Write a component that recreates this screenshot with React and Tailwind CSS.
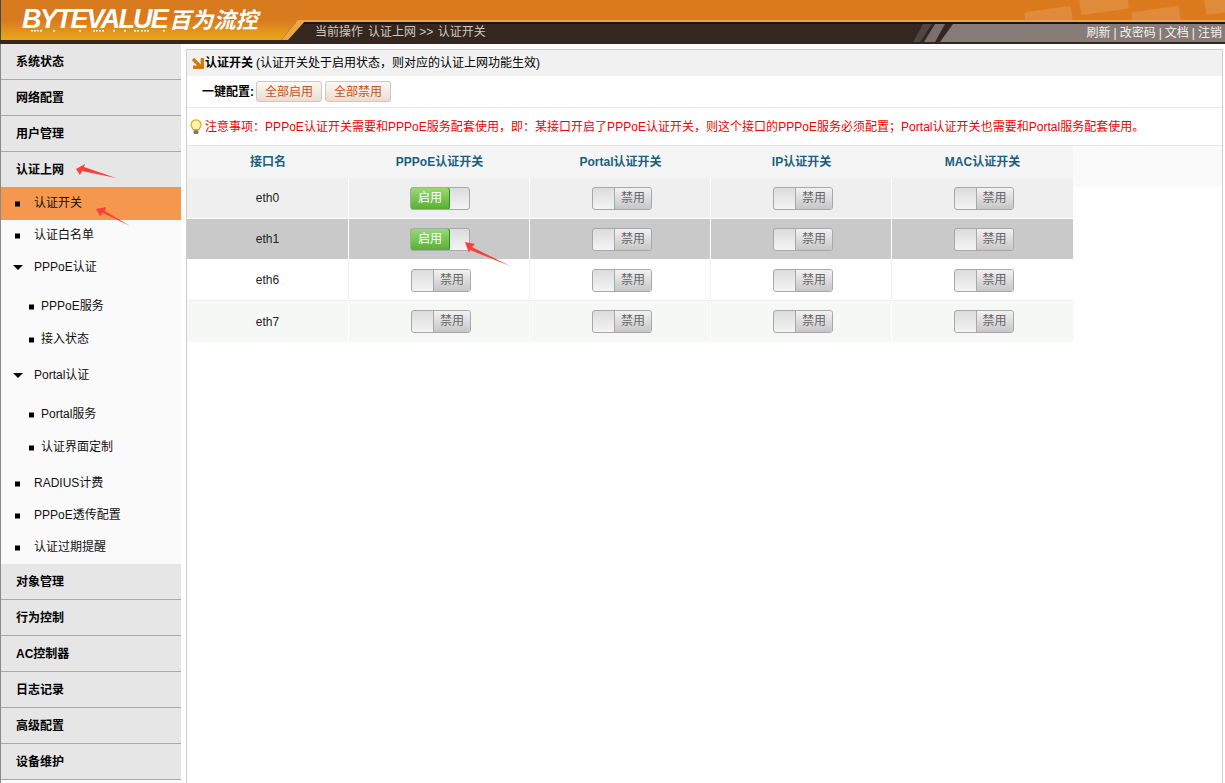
const font = "[font-family:'Liberation_Sans','Noto_Sans_CJK_SC',sans-serif]";

const Arrow = ({ className, points }) => (
  <svg className={`absolute pointer-events-none z-10 ${className}`} width="60" height="36" viewBox="0 0 60 36">
    <polygon points={points} fill="#f8413a" />
  </svg>
);

const MainItem = ({ label }) => (
  <div className="h-[36px] flex items-center pl-[15px] text-[12px] font-bold text-black bg-[#e6e6e6] border-b border-[#a9a9a9] box-border">
    {label}
  </div>
);

const Square = ({ left }) => <span className={`absolute top-1/2 -translate-y-1/2 w-[5px] h-[5px] bg-black ${left}`} />;

const SubItem = ({ label, height = "h-[32px]", active }) => (
  <div className={`relative flex items-center pl-[33px] pb-[2px] text-[12px] text-[#111] ${height} ${active ? "bg-[#f5984e]" : ""}`}>
    <Square left="left-[14px]" />
    {label}
  </div>
);

const GroupItem = ({ label }) => (
  <div className="relative h-[34px] flex items-center pl-[33px] pb-[2px] text-[12px] text-[#111]">
    <span className="absolute left-[12px] top-[14px] w-0 h-0 border-x-[5px] border-x-transparent border-t-[5px] border-t-black" />
    {label}
  </div>
);

const LeafItem = ({ label }) => (
  <div className="relative h-[33px] flex items-center pl-[40px] pb-[2px] text-[12px] text-[#111]">
    <Square left="left-[28px]" />
    {label}
  </div>
);

const Sidebar = () => (
  <aside className="w-[180px] shrink-0 border-l border-[#8a8a8a] bg-[#fafafa] box-content">
    {["系统状态", "网络配置", "用户管理", "认证上网"].map((x) => (
      <MainItem key={x} label={x} />
    ))}
    <SubItem label="认证开关" active />
    <SubItem label="认证白名单" height="h-[31px]" />
    <GroupItem label="PPPoE认证" />
    <div className="h-[5px]" />
    <LeafItem label="PPPoE服务" />
    <LeafItem label="接入状态" />
    <div className="h-[3px]" />
    <GroupItem label="Portal认证" />
    <div className="h-[5px]" />
    <LeafItem label="Portal服务" />
    <LeafItem label="认证界面定制" />
    <div className="h-[4px]" />
    <SubItem label="RADIUS计费" />
    <SubItem label="PPPoE透传配置" />
    <SubItem label="认证过期提醒" />
    {["对象管理", "行为控制", "AC控制器", "日志记录", "高级配置", "设备维护"].map((x) => (
      <MainItem key={x} label={x} />
    ))}
  </aside>
);

const Switch = ({ on }) => (
  <div className="inline-flex w-[60px] h-[23px] rounded-[3px] border border-[#a8a8a8] overflow-hidden bg-gradient-to-b from-[#dcdcdc] to-[#f4f4f4] box-border">
    {on ? (
      <>
        <span className="-m-px w-[40px] h-[23px] rounded-[3px] border border-[#1c9a10] bg-gradient-to-b from-[#9ad874] to-[#57b032] text-white text-[12px] leading-[21px] text-center">
          启用
        </span>
        <span className="flex-1" />
      </>
    ) : (
      <>
        <span className="w-[21px]" />
        <span className="flex-1 border-l border-[#a8a8a8] bg-gradient-to-b from-[#f2f2f2] to-[#c6c6c6] text-[#666] text-[12px] leading-[21px] text-center">
          禁用
        </span>
      </>
    )}
  </div>
);

const rows = [
  { name: "eth0", on: true, bg: "bg-[#efefef]", line: "border-white" },
  { name: "eth1", on: true, bg: "bg-[#c9c9c9]", line: "border-white" },
  { name: "eth6", on: false, bg: "bg-white", line: "border-[#f0f0f0]" },
  { name: "eth7", on: false, bg: "bg-[#f5f8f5]", line: "border-white" },
];

const Cell = ({ children, className }) => (
  <div className={`flex items-center justify-center ${className}`}>{children}</div>
);

const Table = () => (
  <div className="w-[886px]">
    <div className="flex h-[32px] bg-[#f5f5f5] text-[12px] font-bold text-[#1a5f7e]">
      {[
        ["接口名", "w-[162px]"],
        ["PPPoE认证开关", "w-[181px]"],
        ["Portal认证开关", "w-[181px]"],
        ["IP认证开关", "w-[181px]"],
        ["MAC认证开关", "w-[181px]"],
      ].map(([t, w]) => (
        <div key={t} className={`${w} flex items-center justify-center`}>
          {t}
        </div>
      ))}
    </div>
    {rows.map((r, i) => (
      <div key={r.name} className={`flex h-[41px] box-border ${i < 3 ? "border-b" : ""} ${r.line} ${r.bg}`}>
        <Cell className={`w-[162px] border-r ${r.line}`}>
          <span className="text-[12px] text-[#222]">{r.name}</span>
        </Cell>
        <Cell className={`w-[181px] border-r ${r.line} ${r.on ? "pl-[2px]" : "pl-[4px]"}`}>
          <Switch on={r.on} />
        </Cell>
        <Cell className={`w-[181px] border-r ${r.line} pl-[4px]`}>
          <Switch />
        </Cell>
        <Cell className={`w-[181px] border-r ${r.line} pl-[4px]`}>
          <Switch />
        </Cell>
        <Cell className="w-[181px] pl-[2px]">
          <Switch />
        </Cell>
      </div>
    ))}
  </div>
);

const OneKeyButton = ({ label, className = "" }) => (
  <button className={`w-[66px] h-[21px] rounded-[3px] border border-[#cfc7c0] bg-gradient-to-b from-[#fbf8f5] to-[#ecdcd2] text-[12px] text-[#c4511a] ${className}`}>
    {label}
  </button>
);

const Bulb = () => (
  <svg width="12" height="16" viewBox="0 0 12 16" className="shrink-0">
    <path d="M6 .8A5 5 0 0 0 1 5.8c0 2.2 1.6 3 2 4.9h6c.4-1.9 2-2.7 2-4.9A5 5 0 0 0 6 .8z" fill="#fdf3ae" stroke="#e2a80f" strokeWidth="1.2" />
    <rect x="3.6" y="11.2" width="4.8" height="3.8" rx="1" fill="#777" />
  </svg>
);

const CornerArrow = () => (
  <svg width="14" height="14" viewBox="0 0 14 14" className="shrink-0">
    <path d="M13 2v11H2V9.6h7.6V2z" fill="#cf7a12" />
    <path d="M2 3l7.5 7.5" stroke="#cf7a12" strokeWidth="3.2" fill="none" />
  </svg>
);

// the little broken reflection under the logo
const logoDots = [30, 33, 36, 39, 52, 78, 92, 95, 98, 101, 112, 123, 133, 136, 140, 143, 146, 162];

const Header = () => (
  <header className="relative h-[44px] shrink-0 bg-[#35261f] overflow-hidden">
    <div className="relative h-[20px] bg-[#dc7b1d] overflow-hidden">
      <div className="absolute right-[153px] top-[9px] w-[47px] h-[16px] bg-[#e08b3a] -rotate-[8deg] rounded-[2px]" />
      <div className="absolute right-[97px] top-[-4px] w-[48px] h-[16px] bg-[#e08b3a] -rotate-[8deg] rounded-[2px]" />
      <div className="absolute right-[45px] top-[9px] w-[48px] h-[16px] bg-[#e08b3a] -rotate-[8deg] rounded-[2px]" />
      <div className="absolute right-[-25px] top-[-4px] w-[45px] h-[16px] bg-[#e08b3a] -rotate-[8deg] rounded-[2px]" />
    </div>
    <div className="h-[2px] bg-[#e8a24b]" />
    <div className="h-[2px] bg-[#201513]" />
    <div className="absolute left-0 top-0 w-[306px] h-[40px] bg-gradient-to-b from-[#d87a1e] from-50% to-[#e9a71a] [clip-path:polygon(0_0,100%_0,100%_50%,97.4%_50%,91.8%_100%,0_100%)] border-l border-[#3b4a5a]">
      <div className="pl-[21px] pt-[4px] flex items-baseline gap-[2px] text-white italic font-bold">
        <span className="text-[27px] leading-[30px] tracking-[-1.85px] [font-family:'Liberation_Sans',sans-serif]">BYTEVALUE</span>
        <span className="text-[22px] leading-[30px] tracking-[0.3px]">百为流控</span>
      </div>
      <svg className="absolute left-0 top-[30px]" width="180" height="2" viewBox="0 0 180 2">
        {logoDots.map((x) => (
          <rect key={x} x={x} y="0" width="2" height="1.5" fill="#fff" />
        ))}
      </svg>
    </div>
    <div className="absolute left-[281px] top-[20px] w-[25px] h-[20px] bg-[#e8a848] [clip-path:polygon(68%_0,100%_0,28%_100%,0_100%)]" />
    <div className="absolute left-[315px] top-[23px] h-[18px] flex items-center text-[12px] text-[#cfc8c3]">
      <span className="mr-[5px]">当前操作</span>
      <span>认证上网</span>
      <span className="whitespace-pre"> &gt;&gt; </span>
      <span className="ml-px">认证开关</span>
    </div>
    <div className="absolute right-0 top-[24px] h-[18px] w-[285px] bg-[#877b77] [clip-path:polygon(13px_0,100%_0,100%_100%,0_100%)] flex items-center justify-end pr-[3px] text-[12px] text-[#f2f0ee] whitespace-pre [word-spacing:-0.33px]">
      刷新 | 改密码 | 文档 | 注销
    </div>
    <div className="absolute left-[913px] top-[24px] w-[19px] h-[18px] bg-[#4f4543] [clip-path:polygon(10px_0,100%_0,7px_100%,0_100%)]" />
    <div className="absolute left-[924px] top-[24px] w-[21px] h-[18px] bg-[#7b706d] [clip-path:polygon(11px_0,100%_0,11px_100%,0_100%)]" />
  </header>
);

export default function App() {
  return (
    <div className={`relative w-[1225px] h-[783px] overflow-hidden bg-white flex flex-col ${font}`}>
      <Header />
      <div className="flex flex-1 min-h-0">
        <Sidebar />
        <main className="ml-[5px] mt-[5px] w-[1037px] border-l border-t border-r border-[#cfcfcf]">
          <div className="h-[26px] bg-[#f1f1f1] flex items-center pl-[4px] text-[12px] text-black">
            <CornerArrow />
            <span className="font-bold">认证开关</span>
            <span className="ml-[3px]">(认证开关处于启用状态，则对应的认证上网功能生效)</span>
          </div>
          <div className="h-[32px] flex items-center gap-[3px] pl-[15px] border-b border-[#e6e6e6] box-border text-[12px]">
            <span className="font-bold -mr-px">一键配置:</span>
            <OneKeyButton label="全部启用" />
            <OneKeyButton label="全部禁用" />
          </div>
          <div className="h-[38px] flex items-center gap-[3px] pl-[3px] border-b border-[#e6e6e6] box-border text-[12px] text-[#f00000]">
            <Bulb />
            <span className="tracking-[0.02px]">
              注意事项：PPPoE认证开关需要和PPPoE服务配套使用，即：某接口开启了PPPoE认证开关，则这个接口的PPPoE服务必须配置；Portal认证开关也需要和Portal服务配套使用。
            </span>
          </div>
          <div className="relative">
            <div className="absolute left-[886px] top-0 right-0 h-[41px] bg-[#fafafa]" />
            <Table />
          </div>
        </main>
      </div>
      <Arrow className="left-[70px] top-[160px]" points="6,9 15,4 14,7 46,18 12,11 10,15" />
      <Arrow className="left-[92px] top-[205px]" points="4,4 14,2 13,6 38,21 11,8 8,11" />
      <Arrow className="left-[460px] top-[240px]" points="5,2 15,4 12,7 50,26 10,10 9,13" />
    </div>
  );
}
